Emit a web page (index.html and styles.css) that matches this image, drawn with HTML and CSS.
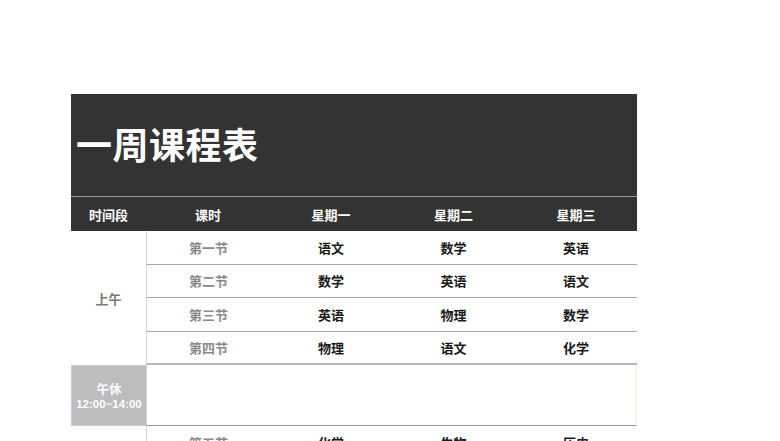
FILE: index.html
```html
<!DOCTYPE html>
<html lang="zh">
<head>
<meta charset="utf-8">
<link rel="stylesheet" href="styles.css">
</head>
<body>
<div class="sheet">
  <div class="title">一周课程表</div>
  <div class="grid">
    <div class="th">时间段</div>
    <div class="th">课时</div>
    <div class="th">星期一</div>
    <div class="th">星期二</div>
    <div class="th">星期三</div>

    <div class="period morning">上午</div>
    <div class="lesson">第一节</div><div class="cell">语文</div><div class="cell">数学</div><div class="cell">英语</div>
    <div class="lesson">第二节</div><div class="cell">数学</div><div class="cell">英语</div><div class="cell">语文</div>
    <div class="lesson">第三节</div><div class="cell">英语</div><div class="cell">物理</div><div class="cell">数学</div>
    <div class="lesson last">第四节</div><div class="cell last">物理</div><div class="cell last">语文</div><div class="cell last">化学</div>

    <div class="lunch"><span class="lunch-name">午休</span><span class="lunch-time">12:00~14:00</span></div>
    <div class="lunch-blank"></div>

    <div class="period afternoon">下午</div>
    <div class="lesson">第五节</div><div class="cell">化学</div><div class="cell">生物</div><div class="cell">历史</div>
    <div class="lesson">第六节</div><div class="cell"></div><div class="cell"></div><div class="cell"></div>
    <div class="lesson">第七节</div><div class="cell"></div><div class="cell"></div><div class="cell"></div>
    <div class="lesson">第八节</div><div class="cell"></div><div class="cell"></div><div class="cell"></div>
  </div>
</div>
</body>
</html>
```

FILE: styles.css
```css
html, body {
  margin: 0;
  padding: 0;
  background: #ffffff;
}
body {
  font-family: "Noto Sans CJK SC", "Liberation Sans", sans-serif;
}
.sheet {
  margin: 94px 0 0 71px;
  width: 566px;
}
.title {
  box-sizing: border-box;
  height: 103px;
  background: #333333;
  color: #ffffff;
  font-size: 36px;
  font-weight: 700;
  line-height: 1;
  padding: 31px 0 0 5px;
  border-bottom: 1px solid #9a9a9a;
  letter-spacing: 0.5px;
}
.grid {
  display: grid;
  grid-template-columns: 75px 124px 122px 123px 122px;
  grid-template-rows: 34px 33.5px 33.5px 33.5px 33.5px 61px 33.5px 33.5px 33.5px 33.5px;
}
.th {
  background: #333333;
  color: #ffffff;
  font-size: 13px;
  font-weight: 700;
  display: flex;
  align-items: center;
  justify-content: center;
}
.period {
  grid-column: 1;
  color: #7a7a7a;
  font-size: 13px;
  font-weight: 700;
  display: flex;
  align-items: center;
  justify-content: center;
}
.morning {
  grid-row: 2 / span 4;
}
.afternoon {
  grid-row: 7 / span 4;
}
.lesson, .cell {
  box-sizing: border-box;
  border-bottom: 1px solid #a8a8a8;
  display: flex;
  align-items: center;
  justify-content: center;
  font-size: 13px;
  font-weight: 700;
}
.lesson {
  color: #8a8a8a;
  border-left: 1px solid #d4d4f4;
}
.cell {
  color: #1a1a1a;
}
.lesson.last, .cell.last {
  border-bottom: 2px solid #b8b8b8;
}
.lunch {
  grid-column: 1;
  background: #bdbdbd;
  color: #ffffff;
  font-weight: 700;
  display: flex;
  flex-direction: column;
  align-items: center;
  justify-content: center;
  border: 1px solid #c8c8f0;
  border-right: none;
  box-sizing: border-box;
}
.lunch-name {
  font-size: 12.5px;
  line-height: 17px;
}
.lunch-time {
  font-size: 11.5px;
  line-height: 15px;
  font-weight: 700;
  font-family: "Liberation Sans", sans-serif;
}
.lunch-blank {
  grid-column: 2 / span 4;
  box-sizing: border-box;
  border-left: 1px solid #d4d4f4;
  border-bottom: 1px solid #9a9a9a;
  border-right: 1px solid #f4f4d8;
}
```
